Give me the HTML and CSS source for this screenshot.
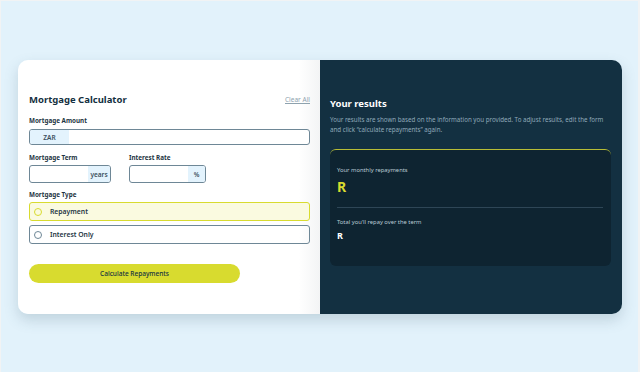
FILE: index.html
```html
<!DOCTYPE html>
<html>
<head>
<meta charset="utf-8">
<link rel="stylesheet" href="styles.css">
</head>
<body>
<div class="page">
  <div class="card">
    <section class="form-panel">
      <div class="form-head">
        <h1 class="title">Mortgage Calculator</h1>
        <a class="clear">Clear All</a>
      </div>
      <label class="label">Mortgage Amount</label>
      <div class="field field-amount">
        <span class="affix affix-pre">ZAR</span>
        <span class="field-input"></span>
      </div>
      <div class="row">
        <div class="col col-term">
          <label class="label">Mortgage Term</label>
          <div class="field field-small">
            <span class="field-input"></span>
            <span class="affix affix-years">years</span>
          </div>
        </div>
        <div class="col col-rate">
          <label class="label">Interest Rate</label>
          <div class="field field-small">
            <span class="field-input"></span>
            <span class="affix affix-pct">%</span>
          </div>
        </div>
      </div>
      <label class="label label-type">Mortgage Type</label>
      <div class="option option-active"><span class="radio radio-active"></span><span>Repayment</span></div>
      <div class="option"><span class="radio"></span><span>Interest Only</span></div>
      <button class="submit">Calculate Repayments</button>
    </section>
    <section class="result-panel">
      <h2 class="res-title">Your results</h2>
      <p class="res-text">Your results are shown based on the information you provided. To adjust results, edit the form and click “calculate repayments” again.</p>
      <div class="res-card">
        <div class="res-label">Your monthly repayments</div>
        <div class="res-big">R</div>
        <div class="res-divider"></div>
        <div class="res-label">Total you'll repay over the term</div>
        <div class="res-small">R</div>
      </div>
    </section>
  </div>
</div>
</body>
</html>
```
FILE: styles.css
```css
* { box-sizing: border-box; margin: 0; padding: 0; }
html, body { width: 640px; height: 372px; overflow: hidden; }
body { background: #f1f3f4; font-family: "Noto Sans", "Open Sans", sans-serif; color: #133041; }
.page {
  margin: 1px 2px 0 1px;
  height: 371px;
  background: #e2f2fb;
  padding: 59px 0 0 17px;
}
.card {
  display: flex;
  width: 604px;
  height: 254px;
  border-radius: 10px;
  box-shadow: 0 6px 14px rgba(70, 100, 120, 0.22);
}
.form-panel {
  width: 302px;
  background: linear-gradient(to right, #ffffff 93%, #f3f4f5 100%);
  border-radius: 10px 0 0 10px;
  padding: 33px 10px 0 11px;
  display: flex;
  flex-direction: column;
}
.form-head { display: flex; justify-content: space-between; align-items: center; height: 14px; }
.title { font-size: 9.5px; font-weight: 700; line-height: 14px; color: #133041; }
.clear { font-size: 6.5px; color: #8ea2ae; text-decoration: underline; line-height: 14px; }
.label { display: block; font-size: 6.3px; font-weight: 700; line-height: 9px; color: #1d3442; margin-top: 9px; }
.field {
  display: flex;
  border: 1px solid #6e8796;
  border-radius: 3px;
  overflow: hidden;
  margin-top: 4px;
  background: #fff;
}
.field-amount { height: 16px; }
.field-small { height: 18px; margin-top: 3px; }
.field-input { flex: 1; }
.affix {
  background: #e3f3fd;
  font-size: 6.5px;
  font-weight: 600;
  color: #3a4f5c;
  display: flex;
  align-items: center;
  justify-content: center;
}
.affix-pre { width: 39px; }
.affix-years { width: 22px; }
.affix-pct { width: 17px; }
.row { display: flex; gap: 18px; margin-top: -1px; }
.col-term { width: 82px; }
.col-rate { width: 77px; }
.label-type { margin-top: 7px; }
.option {
  display: flex;
  align-items: center;
  height: 19px;
  border: 1px solid #6e8796;
  border-radius: 3px;
  margin-top: 4px;
  font-size: 6.8px;
  font-weight: 600;
  color: #1d3442;
  padding-left: 4px;
  gap: 8px;
}
.option-active { background: #fafae0; border-color: #d8db2f; margin-top: 3px; }
.radio {
  width: 8px; height: 8px; border-radius: 50%;
  border: 1px solid #6e8796;
  background: #fff;
}
.radio-active { border-color: #d8db2f; background: transparent; }
.submit {
  margin-top: 20px;
  width: 211px;
  height: 19px;
  border: none;
  border-radius: 10px;
  background: #d8db2f;
  font-family: "Noto Sans", "Open Sans", sans-serif;
  font-size: 6.5px;
  font-weight: 500;
  color: #133041;
}
.result-panel {
  width: 302px;
  background: #133041;
  border-radius: 0 10px 10px 0;
  padding: 37px 11px 0 10px;
}
.res-title { font-size: 9.5px; font-weight: 700; color: #ffffff; line-height: 14px; }
.res-text { margin-top: 4px; font-size: 6.2px; line-height: 10px; color: #8fa9b9; }
.res-card {
  margin-top: 14px;
  height: 117px;
  background: #0e2431;
  border-top: 1px solid #b8bd36;
  border-radius: 6px;
  padding: 16px 8px 0 7px;
}
.res-label { font-size: 5.8px; color: #b9cad4; line-height: 9px; }
.res-big { font-size: 14px; font-weight: 700; color: #d8db2f; line-height: 18px; margin-top: 3px; }
.res-divider { height: 1px; background: #2e4656; margin: 11px 0 10px; }
.res-small { font-size: 9px; font-weight: 700; color: #ffffff; line-height: 12px; margin-top: 3px; }
```
